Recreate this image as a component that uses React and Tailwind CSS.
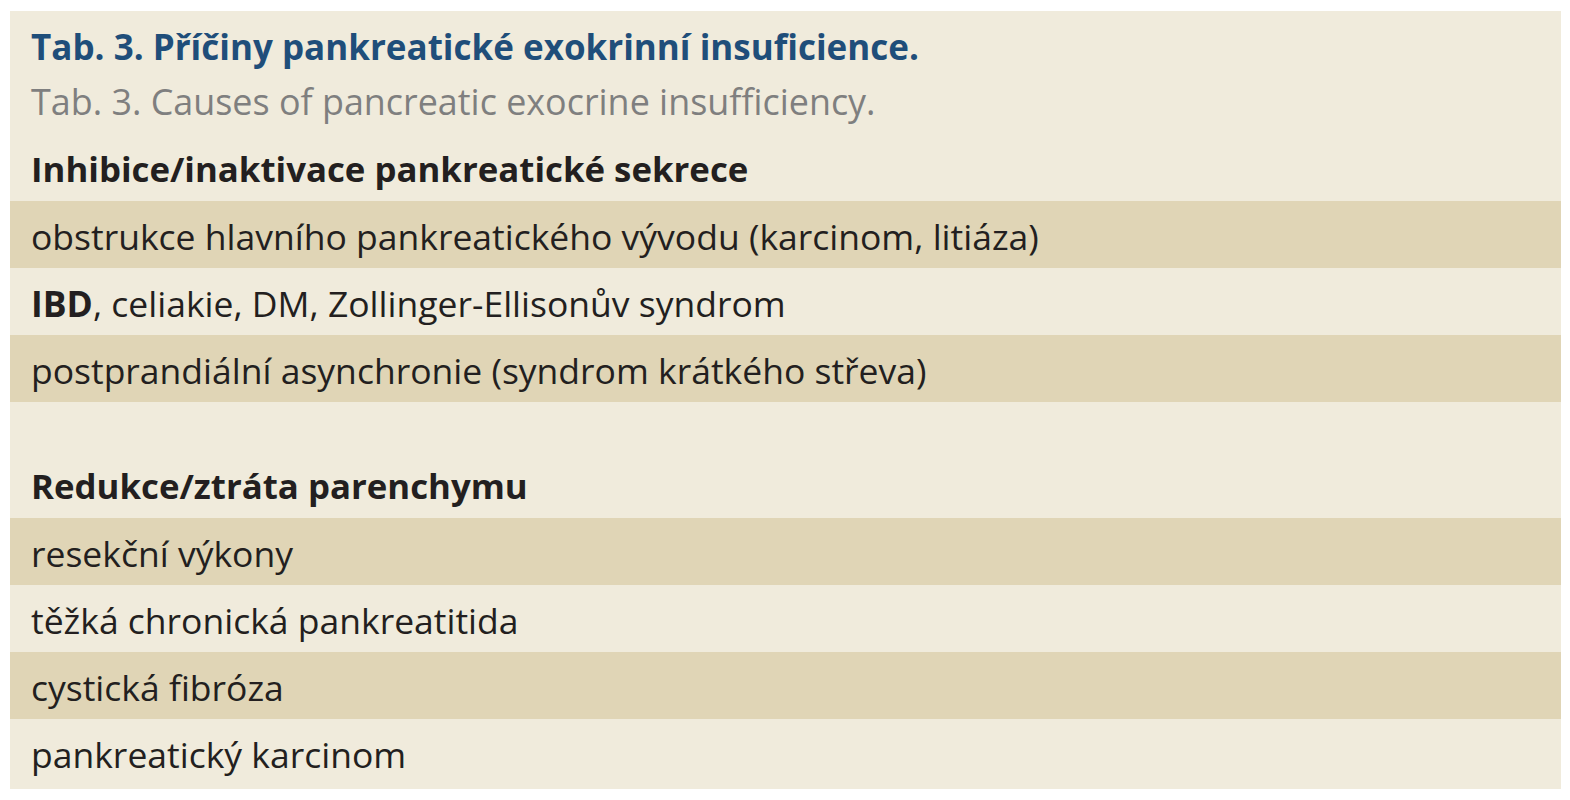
const font = { fontFamily: '"Open Sans", "Noto Sans", sans-serif' };

function Row({ striped, children, bold }) {
  return (
    <div
      className={`h-[67px] flex items-center pt-[4px] pl-[21px] leading-none text-[#231f20] ${
        striped ? 'bg-[#e0d5b6]' : ''
      } ${bold ? 'font-bold text-[34.8px]' : 'text-[35.5px]'}`}
    >
      <span>{children}</span>
    </div>
  );
}

export default function App() {
  return (
    <div className="w-[1570px] h-[800px] bg-white pt-[11px] pl-[10px]" style={font}>
      <div className="w-[1551px] h-[778px] bg-[#f0ebdc] pt-[7px] flex flex-col">
        <div className="h-[56px] flex items-center pl-[21px] text-[35px] font-bold text-[#1f4e7a] leading-none">
          Tab. 3. Příčiny pankreatické exokrinní insuficience.
        </div>
        <div className="h-[56px] flex items-center pl-[21px] text-[35.9px] text-[#7f7f7f] leading-none">
          Tab. 3. Causes of pancreatic exocrine insufficiency.
        </div>
        <div className="mt-[4px]">
          <Row bold>Inhibice/inaktivace pankreatické sekrece</Row>
          <Row striped>obstrukce hlavního pankreatického vývodu (karcinom, litiáza)</Row>
          <Row>
            <b className="font-bold">IBD</b>, celiakie, DM, Zollinger-Ellisonův syndrom
          </Row>
          <Row striped>postprandiální asynchronie (syndrom krátkého střeva)</Row>
          <div className="h-[49px]" />
          <Row bold>Redukce/ztráta parenchymu</Row>
          <Row striped>resekční výkony</Row>
          <Row>těžká chronická pankreatitida</Row>
          <Row striped>cystická fibróza</Row>
          <Row>pankreatický karcinom</Row>
        </div>
      </div>
    </div>
  );
}
